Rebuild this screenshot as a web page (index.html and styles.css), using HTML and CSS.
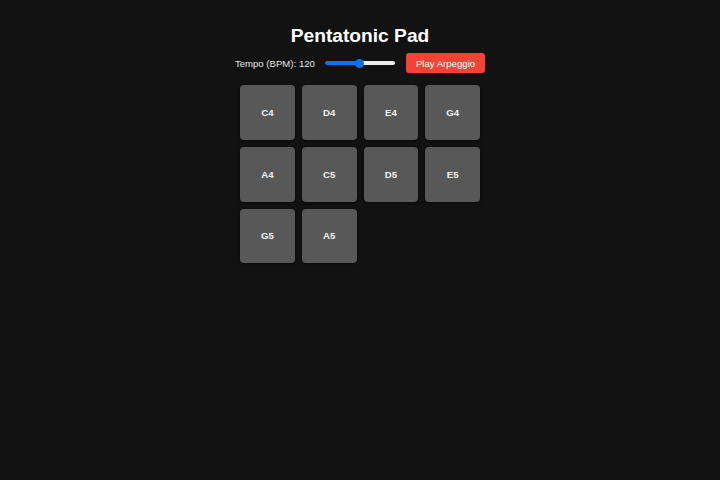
FILE: index.html
```html
<!DOCTYPE html>
<html lang="en">
<head>
<meta charset="utf-8">
<title>Pentatonic Pad</title>
<link rel="stylesheet" href="styles.css">
</head>
<body>
<main class="app">
  <h1 class="title">Pentatonic Pad</h1>
  <div class="controls">
    <label class="tempo-label" for="tempo">Tempo (BPM): <span>120</span></label>
    <input class="tempo-slider" id="tempo" type="range" min="40" max="200" value="120">
    <button class="play-btn" type="button">Play Arpeggio</button>
  </div>
  <div class="pad-grid">
    <button class="pad" type="button">C4</button>
    <button class="pad" type="button">D4</button>
    <button class="pad" type="button">E4</button>
    <button class="pad" type="button">G4</button>
    <button class="pad" type="button">A4</button>
    <button class="pad" type="button">C5</button>
    <button class="pad" type="button">D5</button>
    <button class="pad" type="button">E5</button>
    <button class="pad" type="button">G5</button>
    <button class="pad" type="button">A5</button>
  </div>
</main>
</body>
</html>
```

FILE: styles.css
```css
html, body {
  margin: 0;
  padding: 0;
  background: #121212;
  color: #e8e8e8;
  font-family: "Liberation Sans", Arial, sans-serif;
  height: 100%;
}

.app {
  display: flex;
  flex-direction: column;
  align-items: center;
  padding-top: 25px;
}

.title {
  margin: 0;
  font-size: 19.2px;
  line-height: 22px;
  font-weight: bold;
  color: #ffffff;
}

.controls {
  margin-top: 6px;
  display: flex;
  align-items: center;
  height: 20px;
}

.tempo-label {
  font-size: 9.6px;
  color: #e6e6e6;
}

.tempo-slider {
  -webkit-appearance: none;
  appearance: none;
  width: 70px;
  height: 10px;
  margin: 0 11px 0 10px;
  padding: 0;
  background: transparent;
}

.tempo-slider::-webkit-slider-runnable-track {
  height: 4px;
  border-radius: 2px;
  background: linear-gradient(to right, #0a72f0 50%, #efefef 50%);
}

.tempo-slider::-webkit-slider-thumb {
  -webkit-appearance: none;
  appearance: none;
  width: 9px;
  height: 9px;
  margin-top: -2.5px;
  border-radius: 50%;
  background: #0a72f0;
  border: none;
}

.play-btn {
  height: 20px;
  padding: 0 10px;
  border: none;
  border-radius: 3px;
  background: #f44336;
  color: #ffffff;
  font-family: "Liberation Sans", Arial, sans-serif;
  font-size: 9.6px;
}

.pad-grid {
  margin-top: 12px;
  width: 240px;
  display: grid;
  grid-template-columns: repeat(4, 1fr);
  gap: 7px;
}

.pad {
  aspect-ratio: 1 / 1;
  border: none;
  border-radius: 4px;
  background: #585858;
  color: #f2f2f2;
  font-family: "Liberation Sans", Arial, sans-serif;
  font-size: 9.6px;
  font-weight: bold;
  padding: 0;
  box-shadow: 0 1px 3px rgba(0, 0, 0, 0.5);
}
```
